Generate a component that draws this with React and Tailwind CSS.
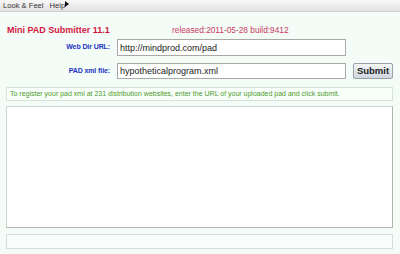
import { useState } from "react";

export default function App() {
  const [url, setUrl] = useState("http://mindprod.com/pad");
  const [file, setFile] = useState("hypotheticalprogram.xml");

  return (
    <div className="w-[400px] h-[254px] overflow-hidden bg-[#f3fcf7] font-['Liberation_Sans',Arial,sans-serif] relative">
      {/* Menu bar */}
      <div className="h-[12px] flex items-center gap-[6px] pl-[3px] bg-gradient-to-b from-[#f8f8f8] to-[#e2e2e2] border-b border-[#cfcfcf] text-[7.6px] text-[#333]">
        <span>Look &amp; Feel</span>
        <span>Help</span>
      </div>
      <svg className="absolute left-[65px] top-[1px]" width="4" height="6" viewBox="0 0 4 6">
        <path d="M0 0 L4 3 L0 6 Z" fill="#111" />
      </svg>

      {/* Header */}
      <div className="flex items-baseline mt-[9px] pl-[7px] h-[12px]">
        <span className="w-[165px] text-[9px] font-bold text-[#d4163f] leading-[12px]">Mini PAD Submitter 11.1</span>
        <span className="text-[8.3px] text-[#cc3a60] leading-[12px] mt-[3px]">released:2011-05-28 build:9412</span>
      </div>

      {/* Form */}
      <div className="grid grid-cols-[110px_229px_40px] gap-x-[7px] gap-y-[7px] mt-[6px] items-center">
        <label className="text-right text-[7px] font-bold tracking-[-0.1px] text-[#2233c4]">Web Dir URL:</label>
        <input
          value={url}
          onChange={(e) => setUrl(e.target.value)}
          className="h-[17px] bg-white border border-[#a8a8a8] px-[2px] text-[9px] text-[#222] outline-none"
        />
        <div />
        <label className="text-right text-[7px] font-bold tracking-[-0.1px] text-[#2233c4]">PAD xml file:</label>
        <input
          value={file}
          onChange={(e) => setFile(e.target.value)}
          className="h-[16px] bg-white border border-[#a8a8a8] px-[2px] text-[9px] text-[#222] outline-none"
        />
        <button className="h-[16px] rounded-[2px] border border-[#9aa0a8] bg-gradient-to-b from-[#f4f6f8] to-[#cfd6de] text-[9.5px] font-bold text-[#222] leading-none">
          Submit
        </button>
      </div>

      {/* Info + output */}
      <div className="flex flex-col pl-[6px] pr-[7px] mt-[8px]">
        <div className="h-[14px] border border-[#d4e4da] bg-[#f8fffa] flex items-center pl-[3px] text-[7px] text-[#4e9a2c] whitespace-nowrap overflow-hidden">
          To register your pad xml at 231 distribution websites, enter the URL of your uploaded pad and click submit.
        </div>
        <textarea className="mt-[5px] h-[122px] resize-none bg-white border border-[#cdd3d0] border-b-[#b2b2b2] border-r-[#b2b2b2] outline-none" />
        <div className="mt-[6px] h-[15px] border border-[#d6dedd] bg-[#f8fcfb]" />
      </div>
    </div>
  );
}
